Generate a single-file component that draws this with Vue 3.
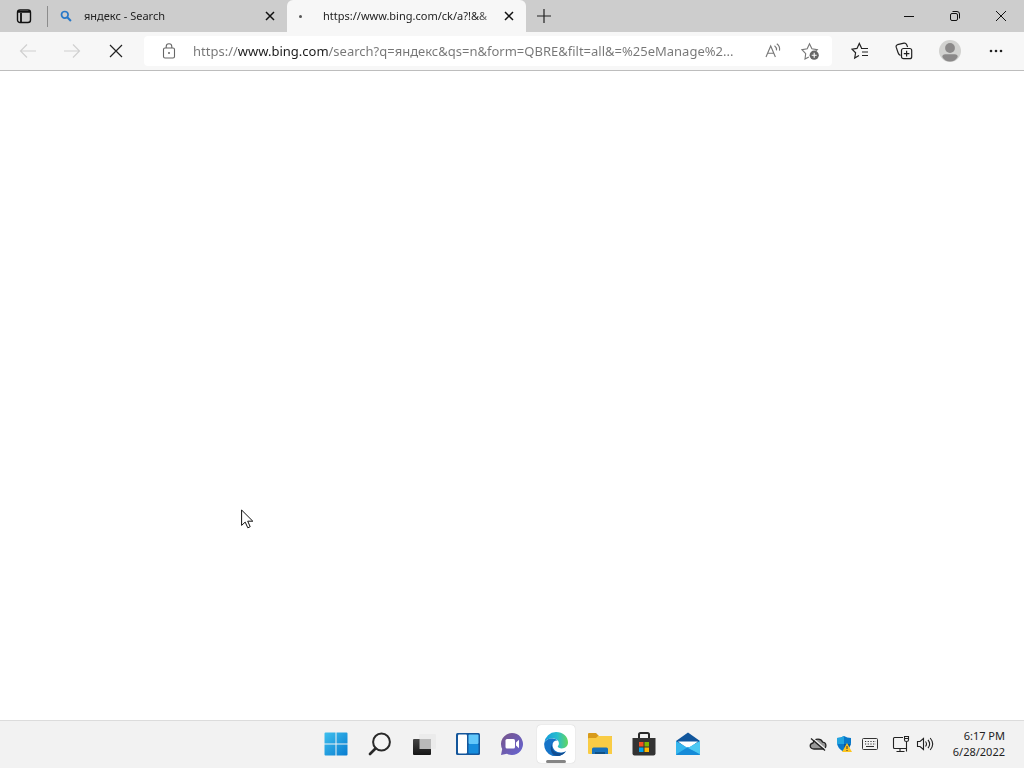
<template>
  <div class="desktop">
    <header class="tab-strip">
      <button class="tab-actions" aria-label="Tab actions">
        <svg width="16" height="16" viewBox="0 0 16 16" fill="none" stroke="#111">
          <rect x="1.5" y="2" width="13" height="12.5" rx="2.5" stroke-width="1.4" />
          <path d="M2 3.8h12M5 5v9" stroke-width="1.8" />
        </svg>
      </button>
      <div
        v-for="tab in tabs"
        :key="tab.id"
        class="tab"
        :class="{ active: tab.id === activeTab }"
        @click="activeTab = tab.id"
      >
        <span class="tab-icon">
          <span v-if="tab.loading" class="loading-dot"></span>
          <svg v-else width="12" height="12" viewBox="0 0 12 12" fill="none" stroke="#2878c8">
            <circle cx="4.8" cy="4.8" r="3.3" stroke-width="1.7" />
            <path d="M7.3 7.3l3.6 3.6" stroke-width="2.1" />
          </svg>
        </span>
        <span class="tab-title">{{ tab.title }}</span>
        <button class="tab-close" aria-label="Close tab" @click.stop>
          <svg width="10" height="10" viewBox="0 0 10 10" stroke="#111" stroke-width="1.5">
            <path d="M1 1l8 8M9 1L1 9" />
          </svg>
        </button>
      </div>
      <button class="new-tab" aria-label="New tab">
        <svg width="16" height="16" viewBox="0 0 16 16" stroke="#222" stroke-width="1.2">
          <path d="M8 1v14M1 8h14" />
        </svg>
      </button>
      <div class="window-controls">
        <button aria-label="Minimize">
          <svg width="12" height="12" viewBox="0 0 12 12" stroke="#111"><path d="M1 6.5h10" /></svg>
        </button>
        <button aria-label="Restore">
          <svg width="12" height="12" viewBox="0 0 12 12" fill="none" stroke="#111">
            <rect x="1.5" y="3.5" width="7" height="7" rx="1.5" />
            <path d="M3.5 1.5H8a2.5 2.5 0 0 1 2.5 2.5v4.5" />
          </svg>
        </button>
        <button aria-label="Close">
          <svg width="12" height="12" viewBox="0 0 12 12" stroke="#111"><path d="M1 1l10 10M11 1L1 11" /></svg>
        </button>
      </div>
    </header>

    <nav class="toolbar">
      <button class="tool" aria-label="Back" disabled>
        <svg width="18" height="16" viewBox="0 0 18 16" fill="none" stroke="#d0d0d0" stroke-width="1.2">
          <path d="M17 8H1.5M8 1.5L1.5 8 8 14.5" />
        </svg>
      </button>
      <button class="tool" aria-label="Forward" disabled>
        <svg width="18" height="16" viewBox="0 0 18 16" fill="none" stroke="#d0d0d0" stroke-width="1.2">
          <path d="M1 8h15.5M10 1.5L16.5 8 10 14.5" />
        </svg>
      </button>
      <button class="tool" aria-label="Stop loading">
        <svg width="14" height="14" viewBox="0 0 14 14" stroke="#222" stroke-width="1.2">
          <path d="M1 1l12 12M13 1L1 13" />
        </svg>
      </button>

      <div class="address-bar">
        <button class="site-info" aria-label="View site information">
          <svg width="14" height="16" viewBox="0 0 14 16" fill="none" stroke="#666" stroke-width="1.1">
            <rect x="1.5" y="5" width="11" height="10" rx="1.5" />
            <path d="M4.2 5V3.5a2.8 2.8 0 0 1 5.6 0V5" />
            <circle cx="7" cy="10" r="1" fill="#666" stroke="none" />
          </svg>
        </button>
        <input v-model="url" class="url" type="text" aria-label="Address bar" spellcheck="false" />
        <button class="read-aloud" aria-label="Read aloud">
          <svg width="16" height="16" viewBox="0 0 16 16" fill="none" stroke="#777" stroke-width="1.1">
            <path d="M1 14L5.7 3l4.700 11M2.700 10.300h6" />
            <path d="M9.500 2.700q2.400 1.800 2 4.600M11.800.8q3.500 2.700 2.700 6.800" />
          </svg>
        </button>
        <button class="favorite" aria-label="Add this page to favorites">
          <svg width="18" height="18" viewBox="0 0 18 18" fill="none" stroke="#777" stroke-width="1.1">
            <path d="M7.8 15L4 17l.7-5.400L1 7.700l5.200-.9L8.500 1.700l2.400 5.100 5.400.9-2 2" />
            <circle cx="13.200" cy="13.200" r="4.600" fill="#666" stroke="none" />
            <path d="M13.200 10.700v5M10.700 13.200h5" stroke="#fff" />
          </svg>
        </button>
      </div>

      <button class="tool" aria-label="Favorites">
        <svg width="18" height="18" viewBox="0 0 18 18" fill="none" stroke="#222" stroke-width="1.2">
          <path d="M8 13.500L3.700 16l.9-5.200L1 7.200l5-.8L8.300 1.500l2.200 4.600M10 6.500h7M11 10h6M11 13.500h6" />
        </svg>
      </button>
      <button class="tool" aria-label="Collections">
        <svg width="18" height="18" viewBox="0 0 18 18" fill="none" stroke="#222" stroke-width="1.2">
          <path d="M5.500 13.500Q3.500 12.500 3 10.500L1.200 5.200q-.5-1.900 1.300-2.500l6.500-1.500q1.800-.3 2.600 1.300l1 2.500" />
          <rect x="6.500" y="6.500" width="10.200" height="10.200" rx="2" fill="#f7f7f7" />
          <path d="M11.600 8.800v5.600M8.800 11.600h5.600" />
        </svg>
      </button>
      <button class="tool profile" aria-label="Profile">
        <svg width="22" height="22" viewBox="0 0 22 22">
          <circle cx="11" cy="11" r="11" fill="#d2d2d0" />
          <circle cx="11" cy="8" r="4.900" fill="#8b8989" />
          <path d="M3.300 17q0-2.800 3-2.800h9.400q3 0 3 2.800Q16 21.500 11 21.500T3.300 17z" fill="#8b8989" />
        </svg>
      </button>
      <button class="tool" aria-label="Settings and more">
        <svg width="14" height="4" viewBox="0 0 14 4" fill="#222">
          <circle cx="2" cy="2" r="1.300" /><circle cx="7" cy="2" r="1.300" /><circle cx="12" cy="2" r="1.300" />
        </svg>
      </button>
    </nav>

    <main class="page">
      <svg class="cursor" width="13" height="20" viewBox="0 0 13 20">
        <path d="M.6 1v15.400l3.600-3.300 2.600 5.700 2.400-1.100-2.500-5.500h5.100z" fill="#fff" stroke="#111" />
      </svg>
    </main>

    <footer class="taskbar">
      <div class="apps">
        <button class="app" aria-label="Start">
          <svg width="24" height="24" viewBox="0 0 24 24">
            <defs>
              <linearGradient id="win" x1="0" y1="0" x2="1" y2="1">
                <stop offset="0" stop-color="#3fc0ee" /><stop offset="1" stop-color="#087cd0" />
              </linearGradient>
            </defs>
            <path d="M1.500.5h10v11H.5v-10q0-1 1-1zM12.500.5h10q1 0 1 1v10h-11zM.5 12.500h11v11h-10q-1 0-1-1zM12.500 12.500h11v10q0 1-1 1h-10z" fill="url(#win)" />
          </svg>
        </button>
        <button class="app" aria-label="Search">
          <svg width="24" height="24" viewBox="0 0 24 24" fill="none" stroke="#292929">
            <circle cx="13.500" cy="10" r="8.400" fill="#f4f4f4" stroke-width="2" />
            <path d="M7.500 16.500l-5.500 5.500" stroke-width="2.700" stroke-linecap="round" />
          </svg>
        </button>
        <button class="app" aria-label="Task view">
          <svg width="24" height="24" viewBox="0 0 24 24">
            <defs>
              <linearGradient id="task" x1="0" y1="0" x2="0" y2="1">
                <stop offset="0" stop-color="#454545" /><stop offset="1" stop-color="#151515" />
              </linearGradient>
            </defs>
            <rect x="7" y="2" width="17" height="15" rx="1" fill="#ebebeb" />
            <rect x="1" y="7" width="18" height="16" rx="1" fill="url(#task)" />
            <path d="M7.500 7H19v10H7.500z" fill="#bababa" />
          </svg>
        </button>
        <button class="app" aria-label="Widgets">
          <svg width="24" height="24" viewBox="0 0 24 24">
            <rect x="0" y="1" width="24" height="22" rx="1.500" fill="#14569b" />
            <rect x="2" y="2.500" width="9" height="19" rx="1" fill="#fff" />
            <rect x="12.500" y="2.500" width="10" height="9.500" rx="1" fill="#62c8fb" />
            <rect x="12.500" y="12" width="10" height="9.500" rx="1" fill="#168ddd" />
          </svg>
        </button>
        <button class="app" aria-label="Chat">
          <svg width="24" height="24" viewBox="0 0 24 24">
            <defs>
              <linearGradient id="chat" x1="0" y1="0" x2="1" y2="1">
                <stop offset="0" stop-color="#785489" /><stop offset="1" stop-color="#6464d5" />
              </linearGradient>
            </defs>
            <path d="M12 1a11 11 0 1 1-5 20.800L1 23l1.200-6A11 11 0 0 1 12 1z" fill="url(#chat)" />
            <rect x="5.500" y="7" width="9.500" height="9.500" rx="1.500" fill="#fff" />
            <path d="M16 10.500l3-2.700v8.400l-3-2.700z" fill="#fff" />
          </svg>
        </button>
        <button class="app running" aria-label="Microsoft Edge">
          <svg width="24" height="24" viewBox="0 0 24 24">
            <defs>
              <linearGradient id="edge" x1="0" y1="0" x2="1" y2="0">
                <stop offset="0" stop-color="#139bdc" /><stop offset=".55" stop-color="#27bdce" />
                <stop offset="1" stop-color="#63d65f" />
              </linearGradient>
            </defs>
            <path d="M.3 11A12 12 0 0 1 12 0c7 0 12 4.700 12 10.200 0 4-2.800 6.200-6.200 6.200-2.300 0-4-.8-4-1.800 0-.8 1.100-1.200 1.100-3.100C14.900 8.500 12 6.600 8.500 6.600 4 6.600.9 8.500.3 11z" fill="url(#edge)" />
            <path d="M.2 11.500C.8 8.600 4 6.500 8.200 6.500c2.200 0 4.300.8 5.500 2.100-3-.5-5.200 1.600-5.200 4.500 0 5 5 8.300 10 7.300 1.500-.3 2.900-1 3.600-1.200A12 12 0 0 1 .2 11.500z" fill="#1674c8" />
            <path d="M9.500 10.300c-3.400 3.200-1.300 9.500 4.200 10.600 3.300.7 6.400-.6 8.300-1.700A12 12 0 0 1 13 24C6.800 23.800 4.500 15 9.500 10.300z" fill="#124e92" />
          </svg>
        </button>
        <button class="app" aria-label="File Explorer">
          <svg width="24" height="24" viewBox="0 0 24 24">
            <path d="M0 2q0-1 1-1h7l3 3h12q1 0 1 1v8H0z" fill="#d89b1b" />
            <path d="M1 6h7l2-2h13q1 0 1 1v17H1q-1 0-1-1V7q0-1 1-1z" fill="#f9cc45" />
            <path d="M4 22v-5q0-1.500 1.500-1.500h13q1.500 0 1.500 1.500v5z" fill="#1771bb" />
            <path d="M7 22v-2h10v2z" fill="#115184" />
          </svg>
        </button>
        <button class="app" aria-label="Microsoft Store">
          <svg width="24" height="24" viewBox="0 0 24 24">
            <path d="M7 7V2.500Q7 1 8.500 1h7Q17 1 17 2.500V7" fill="none" stroke="#292929" stroke-width="2" />
            <path d="M.5 6h23v15.500q0 2-2 2h-19q-2 0-2-2z" fill="#333" />
            <path d="M7 10h4.500v4.500H7z" fill="#f25022" /><path d="M12.500 10H17v4.500h-4.500z" fill="#7fba00" />
            <path d="M7 15.500h4.500V20H7z" fill="#00a4ef" /><path d="M12.500 15.500H17V20h-4.500z" fill="#ffb900" />
          </svg>
        </button>
        <button class="app" aria-label="Mail">
          <svg width="24" height="24" viewBox="0 0 24 24">
            <path d="M0 9L12 .5 24 9v6H0z" fill="#11569c" />
            <path d="M2 9.500h20L12 17z" fill="#fff" />
            <path d="M0 9l12 7 12-7v13q0 1-1 1H1q-1 0-1-1z" fill="#35b6ed" />
            <path d="M0 22.500L12 15l12 7.500q-.3.500-1 .5H1q-.7 0-1-.5z" fill="#168bd8" />
            <path d="M12 16l12-7v13z" fill="#4cc9f3" />
          </svg>
        </button>
      </div>

      <div class="tray">
        <button class="tray-icon" aria-label="OneDrive">
          <svg width="18" height="16" viewBox="0 0 18 16" fill="none" stroke="#222" stroke-width="1.300">
            <path d="M5 13q-3.500-.2-3.800-3Q1.200 7.500 4 7q1-3.800 5-3.800 3.500 0 4.700 3 3.200.3 3.200 3.500Q16.700 13 13 13z" fill="#999" />
            <path d="M3 1.500l14 12" stroke="#f2f2f2" /><path d="M2 2.500l14 12" />
          </svg>
        </button>
        <button class="tray-icon" aria-label="Windows Security">
          <svg width="16" height="16" viewBox="0 0 16 16">
            <path d="M8 0q3 2 7 2v5q0 5-7 9-7-4-7-9V2q4 0 7-2z" fill="#0878ca" />
            <path d="M8 0v8H1V2q4 0 7-2z" fill="#24a5df" /><path d="M8 8v8q5-3 6.500-8z" fill="#0b559d" />
            <path d="M11 7l5 9H6z" fill="#fdc51f" /><path d="M11 10v3M11 14v1" stroke="#433" />
          </svg>
        </button>
        <button class="tray-icon" aria-label="Touch keyboard">
          <svg width="16" height="12" viewBox="0 0 16 12" fill="none" stroke="#333">
            <rect x=".5" y=".5" width="15" height="11" rx="1" />
            <path d="M3 3.500h11M3 6h11" stroke-dasharray="1.200 1.500" /><path d="M4 8.500h8" />
          </svg>
        </button>
        <button class="tray-icon network" aria-label="Network">
          <svg width="18" height="18" viewBox="0 0 18 18" fill="none" stroke="#222" stroke-width="1.100">
            <path d="M11 2.500H2.500q-1 0-1 1v9q0 1 1 1h12M8 13.500V16.500M4.500 16.500h8" />
            <path d="M12.500 1.500h4V5q0 1.500-2 1.500t-2-1.500zM12.500 3.500h4M14.500 6.500v10" />
          </svg>
        </button>
        <button class="tray-icon sound" aria-label="Volume">
          <svg width="18" height="16" viewBox="0 0 18 16" fill="none" stroke="#222" stroke-width="1.100">
            <path d="M1.500 5.500H4L7.500 2.500v11L4 10.500H1.500z" />
            <path d="M9.500 5.500q2 2.500 0 5M12 3.800q3.300 4.200 0 8.400M14.200 2q5 6 0 12" />
          </svg>
        </button>
        <button class="clock">
          <span>6:17 PM</span>
          <span>6/28/2022</span>
        </button>
      </div>
    </footer>
  </div>
</template>

<script setup>
import { ref } from 'vue'

const activeTab = ref(2)
const tabs = ref([
  { id: 1, title: 'яндекс - Search', loading: false },
  { id: 2, title: 'https://www.bing.com/ck/a?!&&', loading: true }
])

const url = ref('https://www.bing.com/search?q=яндекс&qs=n&form=QBRE&filt=all&=%25eManage%2...')
</script>

<style>
body {
  margin: 0;
}
</style>

<style scoped>
.desktop {
  display: flex;
  flex-direction: column;
  min-height: 100vh;
  background: #fff;
  color: #222;
  font-family: "Noto Sans", "Open Sans", sans-serif;
  font-size: 11px;
}

button {
  display: flex;
  align-items: center;
  justify-content: center;
  padding: 0;
  border: none;
  background: none;
  color: inherit;
  font: inherit;
}

svg {
  display: block;
  flex: none;
}

.tab-strip {
  display: flex;
  height: 32px;
  background: #cdcdcd;
}

.tab-actions {
  position: relative;
  width: 48px;
}

.tab-actions::after {
  content: '';
  position: absolute;
  right: 0;
  top: 6px;
  bottom: 5px;
  width: 1px;
  background: #8c8c8c;
}

.tab {
  display: flex;
  align-items: center;
  box-sizing: border-box;
  flex: 0 1 239px;
  min-width: 0;
  padding: 0 7px 0 12px;
}

.tab.active {
  background: #f7f7f7;
  border-radius: 6px 6px 0 0;
}

.tab-icon {
  display: flex;
  align-items: center;
  width: 24px;
}

.loading-dot {
  width: 3px;
  height: 3px;
  border-radius: 50%;
  background: #555;
}

.tab-title {
  flex: 1;
  overflow: hidden;
  line-height: 16px;
  white-space: nowrap;
  mask-image: linear-gradient(to right, #000 88%, transparent);
}

.tab-close {
  width: 20px;
  height: 20px;
}

.new-tab {
  width: 36px;
}

.window-controls {
  display: flex;
  margin-left: auto;
}

.window-controls button {
  width: 46px;
}

.toolbar {
  display: flex;
  align-items: center;
  height: 38px;
  padding: 0 6px;
  background: #f7f7f7;
  border-bottom: 1px solid #bdbdbd;
}

.tool {
  width: 44px;
  height: 32px;
}

.profile {
  width: 48px;
}

.address-bar {
  display: flex;
  align-items: center;
  flex: 1;
  min-width: 0;
  height: 30px;
  margin: 0 6px;
  background: #fff;
  border-radius: 4px;
}

.site-info {
  width: 49px;
}

.url {
  flex: 1;
  min-width: 0;
  height: 24px;
  padding: 0;
  border: none;
  outline: none;
  font: inherit;
  font-size: 13px;
  /* the host is darker than the rest of the address */
  color: transparent;
  background: linear-gradient(to right, #767676 45px, #1c1c1c 45px, #1c1c1c 135px, #767676 135px);
  background-clip: text;
}

.read-aloud {
  width: 30px;
}

.favorite {
  width: 44px;
}

.page {
  position: relative;
  flex: 1;
}

.cursor {
  position: absolute;
  left: 241px;
  top: 438px;
}

.taskbar {
  display: grid;
  grid-template-columns: 1fr auto 1fr;
  height: 46px;
  padding-bottom: 1px;
  background: #f2f2f2;
  border-top: 1px solid #dcdcdc;
}

.apps {
  grid-column: 2;
  display: flex;
  align-items: center;
}

.app {
  position: relative;
  width: 44px;
  height: 40px;
}

.app.running {
  width: 38px;
  height: 38px;
  margin: 0 3px;
  background: #fff;
  border-radius: 4px;
  box-shadow: 0 0 1px #bbb;
}

.app.running::after {
  content: '';
  position: absolute;
  left: 9px;
  right: 9px;
  bottom: 0;
  height: 3px;
  border-radius: 2px;
  background: #858585;
}

.tray {
  display: flex;
  align-items: center;
  justify-content: flex-end;
  padding-right: 19px;
}

.tray-icon {
  width: 26px;
  height: 32px;
}

.network {
  width: 24px;
  margin-left: 6px;
}

.sound {
  width: 24px;
}

.clock {
  flex-direction: column;
  align-items: flex-end;
  min-width: 56px;
  margin-left: 12px;
  line-height: 16px;
}
</style>
